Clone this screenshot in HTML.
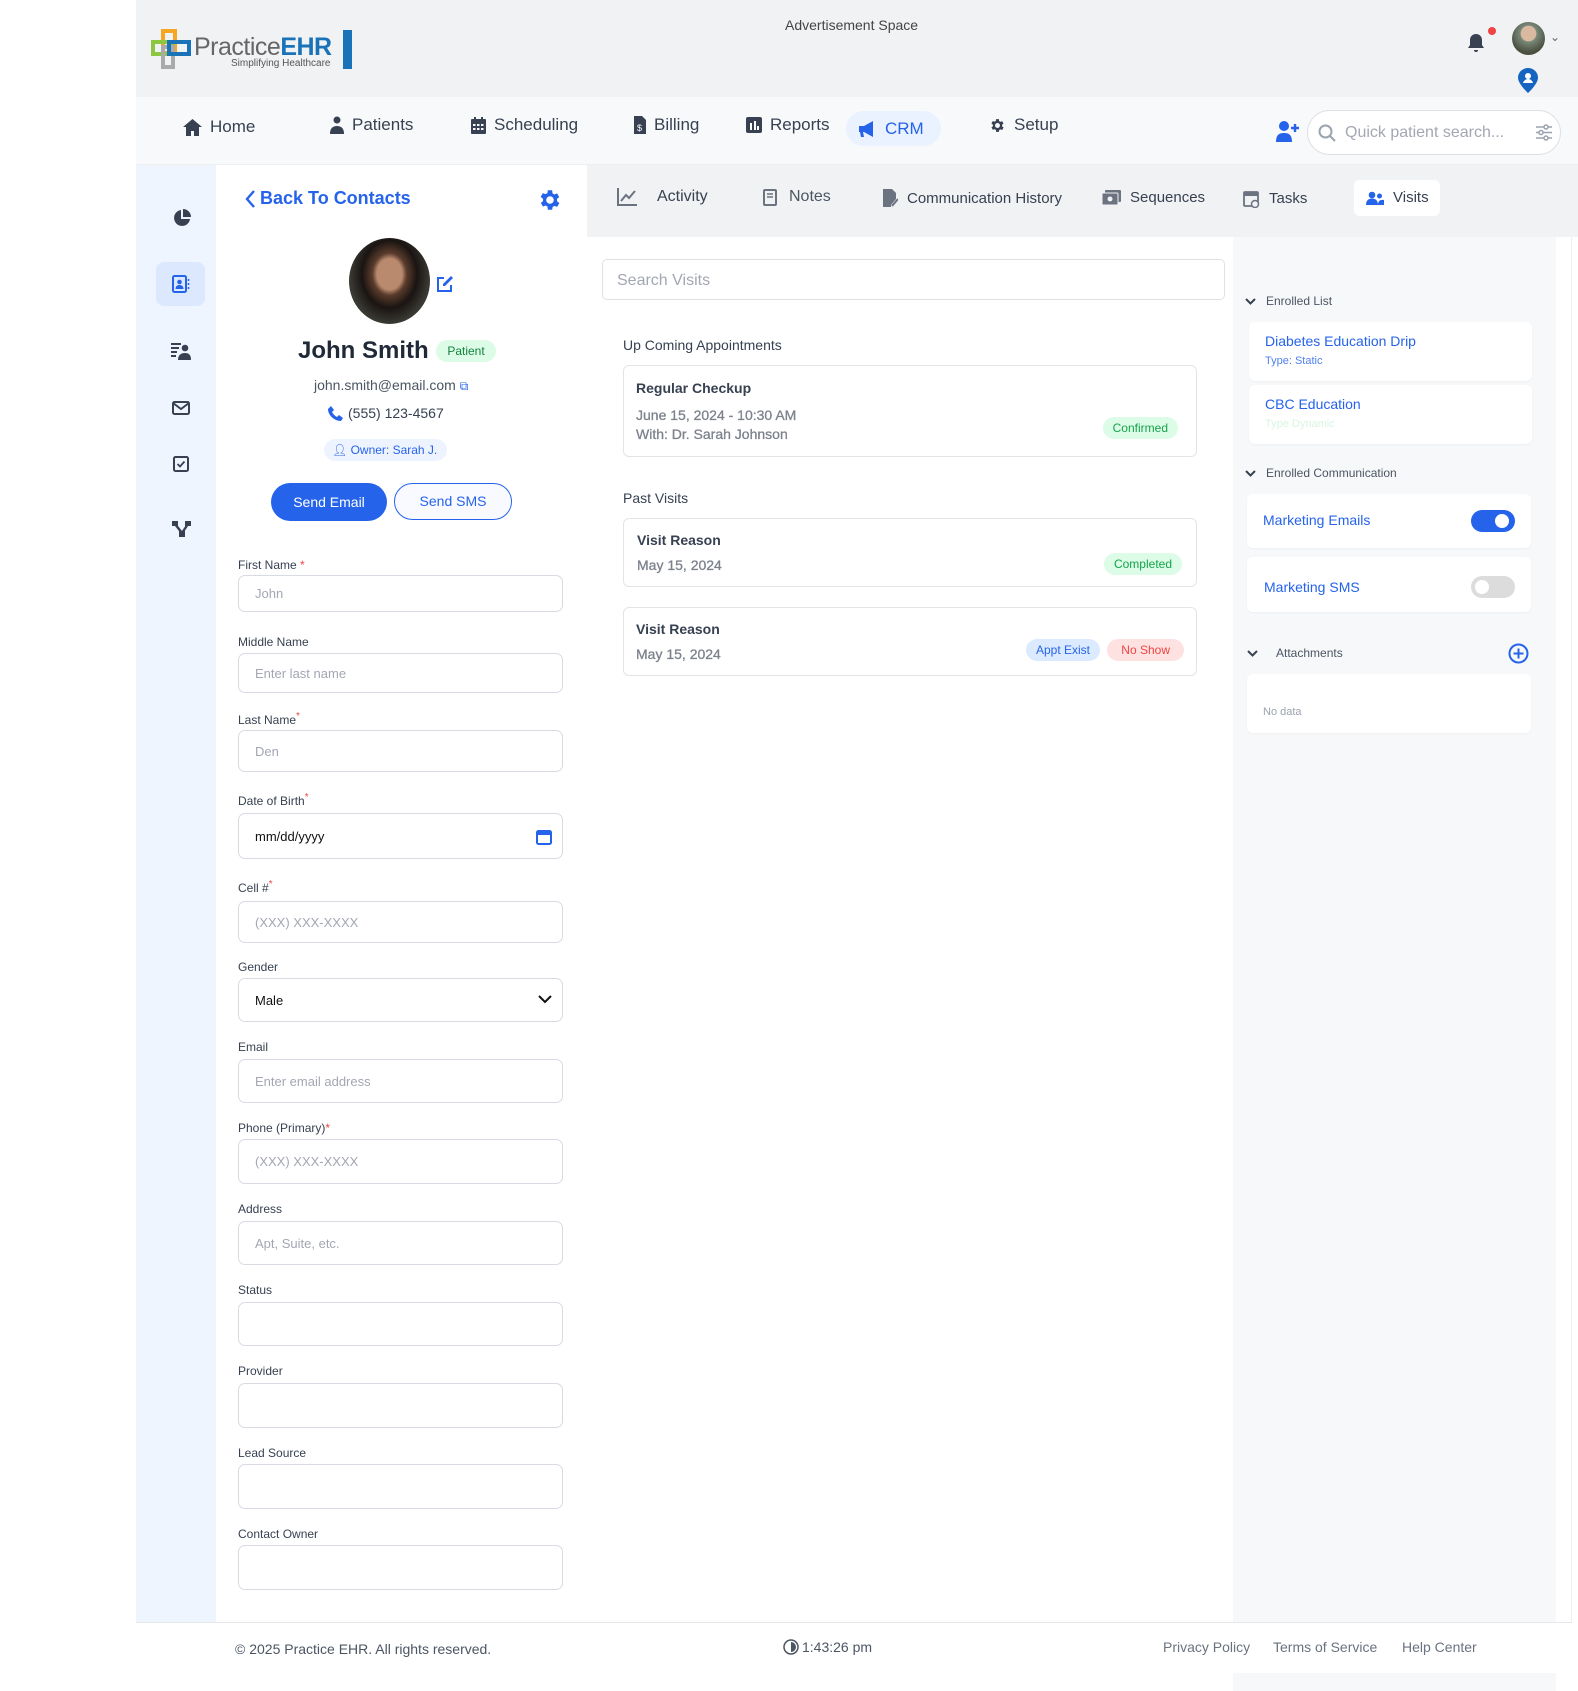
<!DOCTYPE html>
<html><head><meta charset="utf-8"><style>
*{box-sizing:border-box;margin:0;padding:0}
body{width:1578px;height:1691px;position:relative;background:#fff;font-family:"Liberation Sans",Arial,sans-serif;color:#1f2937;overflow:hidden}
.a{position:absolute}
.top{left:136px;top:0;width:1442px;height:97px;background:#f1f2f4}
.nav{left:136px;top:97px;width:1442px;height:68px;background:#f8f9fb;border-bottom:1px solid #eceef2}
.ni{position:absolute;top:117px;font-size:17px;color:#374151;display:flex;align-items:center;gap:8px}
.side{left:136px;top:165px;width:80px;height:1457px;background:#eef5ff}
.tabs{left:587px;top:165px;width:991px;height:72px;background:#f1f2f4}
.tab{position:absolute;top:189px;font-size:15px;color:#374151;display:flex;align-items:center;gap:9px}
.lbl{position:absolute;left:238px;font-size:12px;color:#374151}
.req{color:#ef4444}
.inp{position:absolute;left:238px;width:325px;border:1px solid #d9dbe2;border-radius:7px;font-size:13px;color:#a3a7b3;padding-left:16px;display:flex;align-items:center;background:#fff}
.card{position:absolute;left:623px;width:574px;border:1px solid #e2e4e8;border-radius:6px;background:#fff}
.badge{position:absolute;font-size:12px;border-radius:12px;padding:4px 10px}
.rp{left:1233px;top:237px;width:323px;height:1454px;background:#f7f8fa}
.rc{position:absolute;background:#fff;border-radius:6px;box-shadow:0 1px 2px rgba(0,0,0,.04)}
.rh{position:absolute;font-size:12px;color:#4b5563;display:flex;align-items:center;gap:10px}
.blue{color:#2563eb}
</style></head><body>
<div class="a top"></div>
<svg class="a" style="left:151px;top:29px" width="42" height="42" viewBox="0 0 42 42">
<rect x="12" y="2" width="12" height="22" fill="none" stroke="#f5a623" stroke-width="4"/>
<rect x="2" y="13" width="20" height="12" fill="none" stroke="#8dc63f" stroke-width="4"/>
<rect x="12" y="18" width="10" height="20" fill="none" stroke="#aaa" stroke-width="4"/>
<rect x="18" y="13" width="20" height="12" fill="none" stroke="#1a73b8" stroke-width="4"/>
</svg>
<div class="a" style="left:194px;top:33px;font-size:25px;color:#666;letter-spacing:-.5px">Practice<span style="color:#1a73b8;font-weight:bold">EHR</span></div>
<div class="a" style="left:231px;top:58px;font-size:10px;color:#555">Simplifying Healthcare</div>
<div class="a" style="left:343px;top:30px;width:9px;height:39px;background:#1a73b8"></div>
<div class="a" style="left:785px;top:17px;font-size:14px;color:#444">Advertisement Space</div>
<svg class="a" style="left:1467px;top:33px" width="18" height="20" viewBox="0 0 18 20"><path d="M9 1c-3.5 0-6 2.6-6 6v5l-2 3h16l-2-3V7c0-3.4-2.5-6-6-6zM7 17h4a2 2 0 0 1-4 0z" fill="#374151"/></svg>
<div class="a" style="left:1488px;top:27px;width:8px;height:8px;border-radius:50%;background:#ef4444"></div>
<div class="a" style="left:1512px;top:22px;width:33px;height:33px;border-radius:50%;background:radial-gradient(circle at 50% 35%,#d9b9a0 0 28%,#7a8a7a 30%,#4a5040 70%)"></div>
<div class="a" style="left:1550px;top:30px;font-size:12px;color:#666">⌄</div>
<svg class="a" style="left:1518px;top:68px" width="20" height="25" viewBox="0 0 20 25"><path d="M10 0C4.5 0 0 4.3 0 9.6 0 16 10 25 10 25s10-9 10-15.4C20 4.3 15.5 0 10 0z" fill="#1565c0"/><circle cx="10" cy="8" r="3" fill="#fff"/><path d="M5 15c1-3 3-4 5-4s4 1 5 4z" fill="#fff"/></svg>

<div class="a nav"></div>
<div class="ni" style="left:183px"><svg width="19" height="17" viewBox="0 0 19 17"><path d="M9.5 0L0 8h3v9h5v-5h3v5h5V8h3z" fill="#374151"/></svg>Home</div>
<div class="ni" style="left:330px;top:115px"><svg width="14" height="18" viewBox="0 0 14 18"><circle cx="7" cy="4" r="3.5" fill="#374151"/><path d="M0 18c0-6 3-8 7-8s7 2 7 8z" fill="#374151"/></svg>Patients</div>
<div class="ni" style="left:471px;top:115px"><svg width="15" height="17" viewBox="0 0 15 17"><rect x="0" y="2" width="15" height="15" rx="1" fill="#374151"/><rect x="3" y="0" width="2" height="4" fill="#374151"/><rect x="10" y="0" width="2" height="4" fill="#374151"/><g fill="#f8f9fb"><rect x="2" y="7" width="2.5" height="2"/><rect x="6" y="7" width="2.5" height="2"/><rect x="10" y="7" width="2.5" height="2"/><rect x="2" y="11" width="2.5" height="2"/><rect x="6" y="11" width="2.5" height="2"/><rect x="10" y="11" width="2.5" height="2"/></g></svg>Scheduling</div>
<div class="ni" style="left:634px;top:115px"><svg width="12" height="18" viewBox="0 0 12 18"><path d="M0 0h8l4 4v14H0z" fill="#374151"/><text x="3" y="15" font-size="9" fill="#fff">$</text></svg>Billing</div>
<div class="ni" style="left:746px;top:115px"><svg width="16" height="16" viewBox="0 0 16 16"><rect width="16" height="16" rx="2" fill="#374151"/><rect x="4" y="6" width="2" height="7" fill="#fff"/><rect x="8" y="4" width="2" height="9" fill="#fff"/><rect x="11" y="9" width="2" height="4" fill="#fff"/></svg>Reports</div>
<div class="a" style="left:846px;top:111px;width:95px;height:35px;border-radius:18px;background:#eaf2ff"></div>
<div class="ni" style="left:859px;top:119px;color:#2563eb"><svg width="18" height="16" viewBox="0 0 18 16"><path d="M0 5h5l9-5v16l-9-5H4l1 5H2l-1-5H0z" fill="#2563eb"/></svg>CRM</div>
<div class="ni" style="left:989px;top:115px"><svg width="17" height="17" viewBox="0 0 24 24"><path d="M19.4 13a7.5 7.5 0 0 0 0-2l2.1-1.6-2-3.5-2.5 1a7.6 7.6 0 0 0-1.7-1L15 3h-4l-.4 2.6a7.6 7.6 0 0 0-1.7 1l-2.5-1-2 3.5L6.6 11a7.5 7.5 0 0 0 0 2l-2.1 1.6 2 3.5 2.5-1a7.6 7.6 0 0 0 1.7 1L11 21h4l.4-2.6a7.6 7.6 0 0 0 1.7-1l2.5 1 2-3.5zM13 15.5a3.5 3.5 0 1 1 0-7 3.5 3.5 0 0 1 0 7z" fill="#374151" transform="translate(-1 0)"/></svg>Setup</div>
<svg class="a" style="left:1276px;top:120px" width="24" height="22" viewBox="0 0 24 22"><circle cx="8" cy="6" r="5" fill="#2563eb"/><path d="M0 22c0-7 3-9 8-9s8 2 8 9z" fill="#2563eb"/><path d="M19 4v8M15 8h8" stroke="#2563eb" stroke-width="2.4"/></svg>
<div class="a" style="left:1307px;top:110px;width:254px;height:45px;border:1px solid #dde0e5;border-radius:23px;background:#fff"></div>
<svg class="a" style="left:1318px;top:124px" width="18" height="18" viewBox="0 0 18 18"><circle cx="7.5" cy="7.5" r="6" fill="none" stroke="#9ca3af" stroke-width="2"/><path d="M12 12l5 5" stroke="#9ca3af" stroke-width="2"/></svg>
<div class="a" style="left:1345px;top:124px;font-size:16px;color:#a3a7b3">Quick patient search...</div>
<svg class="a" style="left:1535px;top:124px" width="18" height="17" viewBox="0 0 18 17"><g stroke="#9ca3af" stroke-width="1.5" fill="#fff"><path d="M1 3h16M1 8.5h16M1 14h16"/><circle cx="11" cy="3" r="2"/><circle cx="6" cy="8.5" r="2"/><circle cx="11" cy="14" r="2"/></g></svg>

<div class="a side"></div>
<svg class="a" style="left:173px;top:209px" width="18" height="18" viewBox="0 0 18 18"><path d="M8 1a8 8 0 1 0 9 9H8z" fill="#374151"/><path d="M10 0v8h8a8 8 0 0 0-8-8z" fill="#374151"/><path d="M10 9.5h7" stroke="#eef5ff" stroke-width="1"/></svg>
<div class="a" style="left:156px;top:262px;width:49px;height:44px;border-radius:8px;background:#dbe8fd"></div>
<svg class="a" style="left:172px;top:275px" width="18" height="18" viewBox="0 0 18 18"><rect x="1" y="1" width="13" height="16" rx="1.5" fill="none" stroke="#2563eb" stroke-width="2"/><circle cx="7.5" cy="7" r="2.3" fill="#2563eb"/><path d="M3.5 14c0-3 2-4 4-4s4 1 4 4z" fill="#2563eb"/><path d="M16.5 4v2M16.5 8v2M16.5 12v2" stroke="#2563eb" stroke-width="1.5"/></svg>
<svg class="a" style="left:171px;top:342px" width="20" height="18" viewBox="0 0 20 18"><path d="M0 2h10M0 6h8M0 10h6M0 14h5" stroke="#374151" stroke-width="2"/><circle cx="14" cy="6" r="3.3" fill="#374151"/><path d="M7 18c0-5 3-7 7-7s6 2 6 7z" fill="#374151"/></svg>
<svg class="a" style="left:172px;top:401px" width="18" height="14" viewBox="0 0 18 14"><rect x="1" y="1" width="16" height="12" rx="1.5" fill="none" stroke="#374151" stroke-width="2"/><path d="M1 2l8 6 8-6" fill="none" stroke="#374151" stroke-width="2"/></svg>
<svg class="a" style="left:173px;top:456px" width="16" height="16" viewBox="0 0 16 16"><rect x="1" y="1" width="14" height="14" rx="1.5" fill="none" stroke="#374151" stroke-width="2"/><path d="M4.5 8l2.5 2.5 4.5-5" fill="none" stroke="#374151" stroke-width="1.8"/></svg>
<svg class="a" style="left:172px;top:521px" width="20" height="16" viewBox="0 0 20 16"><rect x="0" y="0" width="6" height="5" fill="#374151"/><rect x="13" y="0" width="6" height="5" fill="#374151"/><rect x="7" y="10" width="6" height="6" fill="#374151"/><path d="M3 3l7 9M16 3l-6 9" stroke="#374151" stroke-width="2.4"/></svg>

<div class="a blue" style="left:245px;top:188px;font-size:18px;font-weight:bold;display:flex;align-items:center;gap:4px"><svg width="11" height="18" viewBox="0 0 11 18"><path d="M9 1L2 9l7 8" fill="none" stroke="#2563eb" stroke-width="2.4"/></svg>Back To Contacts</div>
<svg class="a" style="left:537px;top:187px" width="26" height="26" viewBox="0 0 24 24"><path d="M19.4 13a7.5 7.5 0 0 0 0-2l2.1-1.6-2-3.5-2.5 1a7.6 7.6 0 0 0-1.7-1L15 3h-4l-.4 2.6a7.6 7.6 0 0 0-1.7 1l-2.5-1-2 3.5L6.6 11a7.5 7.5 0 0 0 0 2l-2.1 1.6 2 3.5 2.5-1a7.6 7.6 0 0 0 1.7 1L11 21h4l.4-2.6a7.6 7.6 0 0 0 1.7-1l2.5 1 2-3.5zM13 15.5a3.5 3.5 0 1 1 0-7 3.5 3.5 0 0 1 0 7z" fill="#2563eb" transform="translate(-1 0)"/></svg>
<div class="a" style="left:349px;top:238px;width:81px;height:86px;border-radius:50%;background:radial-gradient(ellipse at 50% 42%,#b98a6e 0 22%,#5a3c2c 30%,#1a1412 48%,#3a3a34 70%,#222 100%)"></div>
<svg class="a" style="left:436px;top:275px" width="18" height="18" viewBox="0 0 18 18"><path d="M8 3H2v13h13v-6" fill="none" stroke="#2563eb" stroke-width="2"/><path d="M15 1l2 2-8 8H7V9z" fill="#2563eb"/></svg>
<div class="a" style="left:298px;top:337px;font-size:24px;font-weight:bold;color:#1f2937">John Smith</div>
<div class="a" style="left:436px;top:340px;width:60px;height:22px;border-radius:11px;background:#dcfce7;color:#15803d;font-size:12px;text-align:center;line-height:22px">Patient</div>
<div class="a" style="left:314px;top:377px;font-size:14px;color:#4b5563">john.smith@email.com <span class="blue" style="font-size:12px">⧉</span></div>
<div class="a" style="left:328px;top:405px;font-size:14px;color:#374151;display:flex;gap:5px;align-items:center"><svg width="15" height="15" viewBox="0 0 15 15"><path d="M3 0l3 4-2 2c1 2 3 4 5 5l2-2 4 3-2 3C6 15 0 9 0 3z" fill="#2563eb"/></svg>(555) 123-4567</div>
<div class="a" style="left:324px;top:439px;width:123px;height:22px;border-radius:11px;background:#eef4ff;color:#2563eb;font-size:12px;line-height:22px;padding-left:8px">👤︎ Owner: Sarah J.</div>
<div class="a" style="left:271px;top:483px;width:116px;height:38px;border-radius:19px;background:#2563eb;color:#fff;font-size:14px;text-align:center;line-height:38px">Send Email</div>
<div class="a" style="left:394px;top:483px;width:118px;height:37px;border-radius:19px;border:1.5px solid #2563eb;color:#2563eb;font-size:14px;text-align:center;line-height:34px;background:#f8faff">Send SMS</div>

<div class="lbl" style="top:558px">First Name <span class="req">*</span></div>
<div class="inp" style="top:575px;height:37px">John</div>
<div class="lbl" style="top:635px">Middle Name</div>
<div class="inp" style="top:653px;height:40px">Enter last name</div>
<div class="lbl" style="top:711px">Last Name<sup class="req">*</sup></div>
<div class="inp" style="top:730px;height:42px">Den</div>
<div class="lbl" style="top:792px">Date of Birth<sup class="req">*</sup></div>
<div class="inp" style="top:813px;height:46px;color:#111">mm/dd/yyyy<svg style="position:absolute;right:10px;top:15px" width="16" height="16" viewBox="0 0 16 16"><rect x="1" y="2" width="14" height="13" rx="1.5" fill="none" stroke="#2563eb" stroke-width="2"/><rect x="1" y="2" width="14" height="4" fill="#2563eb"/></svg></div>
<div class="lbl" style="top:879px">Cell #<sup class="req">*</sup></div>
<div class="inp" style="top:901px;height:42px">(XXX) XXX-XXXX</div>
<div class="lbl" style="top:960px">Gender</div>
<div class="inp" style="top:978px;height:44px;color:#111">Male<svg style="position:absolute;right:10px;top:16px" width="14" height="9" viewBox="0 0 14 9"><path d="M1 1l6 6 6-6" fill="none" stroke="#111" stroke-width="2"/></svg></div>
<div class="lbl" style="top:1040px">Email</div>
<div class="inp" style="top:1059px;height:44px">Enter email address</div>
<div class="lbl" style="top:1121px">Phone (Primary)<span class="req">*</span></div>
<div class="inp" style="top:1139px;height:45px">(XXX) XXX-XXXX</div>
<div class="lbl" style="top:1202px">Address</div>
<div class="inp" style="top:1221px;height:44px">Apt, Suite, etc.</div>
<div class="lbl" style="top:1283px">Status</div>
<div class="inp" style="top:1302px;height:44px"></div>
<div class="lbl" style="top:1364px">Provider</div>
<div class="inp" style="top:1383px;height:45px"></div>
<div class="lbl" style="top:1446px">Lead Source</div>
<div class="inp" style="top:1464px;height:45px"></div>
<div class="lbl" style="top:1527px">Contact Owner</div>
<div class="inp" style="top:1545px;height:45px"></div>

<div class="a tabs"></div>
<div class="tab" style="left:617px;font-size:16px;top:188px;gap:20px"><svg width="20" height="18" viewBox="0 0 20 18"><path d="M1 0v17h19" fill="none" stroke="#6b7280" stroke-width="2"/><path d="M4 13l5-6 3 3 6-7" fill="none" stroke="#6b7280" stroke-width="2"/></svg>Activity</div>
<div class="tab" style="left:763px;font-size:16px;top:188px;color:#4b5563;gap:12px"><svg width="14" height="17" viewBox="0 0 14 17"><rect x="1" y="1" width="12" height="15" rx="1" fill="none" stroke="#6b7280" stroke-width="2"/><path d="M4 5h6M4 8h6" stroke="#6b7280" stroke-width="1.5"/></svg>Notes</div>
<div class="tab" style="left:883px"><svg width="15" height="18" viewBox="0 0 15 18"><path d="M0 0h9l4 4v6l-5 6v2H0z" fill="#6b7280"/><path d="M9 17l6-7" stroke="#6b7280" stroke-width="2"/></svg>Communication History</div>
<div class="tab" style="left:1102px"><svg width="19" height="15" viewBox="0 0 19 15"><rect x="3" y="0" width="16" height="12" rx="1" fill="#6b7280"/><rect x="0" y="3" width="16" height="12" rx="1" fill="#6b7280" stroke="#f1f2f4"/><circle cx="8" cy="9" r="2.5" fill="#f1f2f4"/></svg>Sequences</div>
<div class="tab" style="left:1243px"><svg width="17" height="19" viewBox="0 0 17 19"><rect x="1" y="3" width="14" height="14" rx="1" fill="none" stroke="#6b7280" stroke-width="1.8"/><path d="M1 3h14v4H1z" fill="#6b7280"/><circle cx="12" cy="15" r="3.5" fill="#f1f2f4" stroke="#6b7280" stroke-width="1.5"/></svg>Tasks</div>
<div class="a" style="left:1354px;top:180px;width:86px;height:36px;border-radius:6px;background:#fff"></div>
<div class="tab" style="left:1366px"><svg width="18" height="14" viewBox="0 0 18 14"><circle cx="6" cy="4" r="3.3" fill="#2563eb"/><path d="M0 14c0-5 3-6.5 6-6.5s6 1.5 6 6.5z" fill="#2563eb"/><circle cx="13.5" cy="5" r="2.5" fill="#2563eb"/><path d="M12 14c0-4 2-5.5 6-5v5z" fill="#2563eb"/></svg>Visits</div>

<div class="a" style="left:602px;top:259px;width:623px;height:41px;border:1px solid #dfe1e6;border-radius:5px;font-size:16px;color:#a3a7b3;padding:12px 14px">Search Visits</div>
<div class="a" style="left:623px;top:337px;font-size:14px;color:#374151">Up Coming Appointments</div>
<div class="card" style="top:365px;height:92px">
<div class="a" style="left:12px;top:14px;font-size:14px;font-weight:bold;color:#374151">Regular Checkup</div>
<div class="a" style="left:12px;top:40px;font-size:14px;color:#7d828c;line-height:19px;-webkit-text-stroke:.3px #7d828c">June 15, 2024 - 10:30 AM<br>With: Dr. Sarah Johnson</div>
<div class="badge" style="right:18px;top:51px;background:#dcfce7;color:#16a34a">Confirmed</div>
</div>
<div class="a" style="left:623px;top:490px;font-size:14px;color:#374151">Past Visits</div>
<div class="card" style="top:518px;height:69px">
<div class="a" style="left:13px;top:13px;font-size:14px;font-weight:bold;color:#374151">Visit Reason</div>
<div class="a" style="left:13px;top:38px;font-size:14px;color:#7d828c;-webkit-text-stroke:.3px #7d828c">May 15, 2024</div>
<div class="badge" style="right:14px;top:34px;background:#dcfce7;color:#16a34a">Completed</div>
</div>
<div class="card" style="top:607px;height:69px">
<div class="a" style="left:12px;top:13px;font-size:14px;font-weight:bold;color:#374151">Visit Reason</div>
<div class="a" style="left:12px;top:38px;font-size:14px;color:#7d828c;-webkit-text-stroke:.3px #7d828c">May 15, 2024</div>
<div class="badge" style="right:96px;top:31px;background:#dbeafe;color:#2563eb">Appt Exist</div>
<div class="badge" style="right:12px;top:31px;background:#fee2e2;color:#ef4444;padding:4px 14px">No Show</div>
</div>

<div class="a rp"></div>
<div class="a" style="left:1571px;top:237px;width:1px;height:1385px;background:#eceef2"></div>
<div class="rh" style="left:1245px;top:294px"><svg width="11" height="7" viewBox="0 0 11 7"><path d="M1 1l4.5 4.5L10 1" fill="none" stroke="#374151" stroke-width="2"/></svg>Enrolled List</div>
<div class="rc" style="left:1249px;top:322px;width:283px;height:59px"><div class="a blue" style="left:16px;top:11px;font-size:14px">Diabetes Education Drip</div><div class="a blue" style="left:16px;top:33px;font-size:11px;color:#4f7ff0">Type: Static</div></div>
<div class="rc" style="left:1249px;top:385px;width:283px;height:59px"><div class="a blue" style="left:16px;top:11px;font-size:14px">CBC Education</div><div class="a" style="left:16px;top:33px;font-size:11px;color:#d8f5e4">Type Dynamic</div></div>
<div class="rh" style="left:1245px;top:466px"><svg width="11" height="7" viewBox="0 0 11 7"><path d="M1 1l4.5 4.5L10 1" fill="none" stroke="#374151" stroke-width="2"/></svg>Enrolled Communication</div>
<div class="rc" style="left:1247px;top:494px;width:284px;height:54px"><div class="a blue" style="left:16px;top:18px;font-size:14px">Marketing Emails</div><div class="a" style="left:224px;top:16px;width:44px;height:22px;border-radius:11px;background:#2563eb"><div class="a" style="left:24px;top:4px;width:14px;height:14px;border-radius:50%;background:#fff"></div></div></div>
<div class="rc" style="left:1247px;top:557px;width:284px;height:55px"><div class="a blue" style="left:17px;top:22px;font-size:14px">Marketing SMS</div><div class="a" style="left:224px;top:19px;width:44px;height:22px;border-radius:11px;background:#dcdcdc"><div class="a" style="left:4px;top:4px;width:14px;height:14px;border-radius:50%;background:#fff"></div></div></div>
<div class="rh" style="left:1247px;top:646px;gap:18px"><svg width="11" height="7" viewBox="0 0 11 7"><path d="M1 1l4.5 4.5L10 1" fill="none" stroke="#374151" stroke-width="2"/></svg>Attachments</div>
<svg class="a" style="left:1508px;top:643px" width="21" height="21" viewBox="0 0 21 21"><circle cx="10.5" cy="10.5" r="9" fill="none" stroke="#2563eb" stroke-width="2"/><path d="M10.5 5.5v10M5.5 10.5h10" stroke="#2563eb" stroke-width="2"/></svg>
<div class="rc" style="left:1247px;top:674px;width:284px;height:59px"><div class="a" style="left:16px;top:32px;font-size:11px;color:#9ca3af">No data</div></div>

<div class="a" style="left:136px;top:1622px;width:1436px;height:51px;background:#fff;border-top:1px solid #e5e7eb"></div>
<div class="a" style="left:235px;top:1641px;font-size:14px;color:#4b5563">© 2025 Practice EHR. All rights reserved.</div>
<div class="a" style="left:783px;top:1639px;font-size:14px;color:#4b5563;display:flex;align-items:center;gap:3px"><svg width="16" height="16" viewBox="0 0 16 16"><circle cx="8" cy="8" r="7" fill="none" stroke="#4b5563" stroke-width="1.5"/><path d="M8 3a5 5 0 0 1 0 10z" fill="#4b5563"/></svg>1:43:26 pm</div>
<div class="a" style="left:1163px;top:1639px;font-size:14px;color:#6b7280">Privacy Policy</div>
<div class="a" style="left:1273px;top:1639px;font-size:14px;color:#6b7280">Terms of Service</div>
<div class="a" style="left:1402px;top:1639px;font-size:14px;color:#6b7280">Help Center</div>
</body></html>
